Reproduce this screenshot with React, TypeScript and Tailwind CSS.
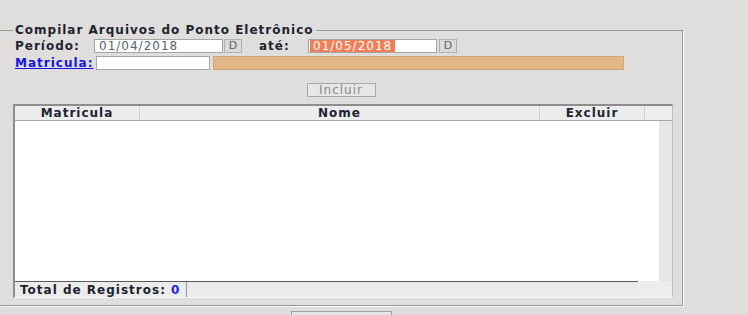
export default function App() {
  return (
    <div className="h-[315px] w-[748px] overflow-hidden bg-[#dfdedc] font-['DejaVu_Sans',sans-serif] text-[12px] leading-[14px] tracking-[1px] text-[#1d2431]">
      <fieldset className="mt-[23px] w-[683px] border border-l-0 border-[#9a9a9a] pb-[7px] shadow-[1px_1px_0_#f5f5f5]">
        <legend className="ml-[13px] px-[2px] font-bold">
          Compilar Arquivos do Ponto Eletrônico
        </legend>

        {/* periodo */}
        <div className="mt-[1px] flex h-[15px] items-center pl-[15px]">
          <span className="w-[79px] font-bold">Período:</span>
          <div className="flex h-[14px] w-[129px] items-center border border-[#a5a5a5] bg-white pl-[4px] text-[#5c6472]">
            01/04/2018
          </div>
          <div className="ml-[1px] flex h-[14px] w-[18px] items-center justify-center border border-[#b0b0b0] bg-[#dadada] text-[11px] tracking-normal text-[#666]">
            D
          </div>
          <span className="ml-[17px] w-[49px] font-bold">até:</span>
          <div className="flex h-[14px] w-[129px] items-center border border-[#a5a5a5] bg-white pl-[1px]">
            <span className="bg-[#f07f58] px-[3px] leading-[12px] text-white">01/05/2018</span>
          </div>
          <div className="ml-[2px] flex h-[14px] w-[18px] items-center justify-center border border-[#b0b0b0] bg-[#dadada] text-[11px] tracking-normal text-[#666]">
            D
          </div>
        </div>

        {/* matricula */}
        <div className="mt-[3px] flex h-[14px] items-center pl-[15px]">
          <a className="w-[81px] cursor-pointer font-bold text-[#1414e6] underline">Matricula:</a>
          <div className="h-[14px] w-[114px] border border-[#a5a5a5] bg-white" />
          <div className="ml-[3px] h-[14px] w-[411px] border border-[#c9a77f] bg-[#e3b886]" />
        </div>

        <div className="mt-[13px] flex justify-center">
          <div className="flex h-[14px] w-[69px] items-center justify-center border border-[#a8a8a8] bg-[#e6e6e6] text-[#8a8a8a]">
            Incluir
          </div>
        </div>

        {/* grid */}
        <div className="ml-[13px] mt-[7px] w-[660px] border-b border-l-2 border-r border-t-2 border-[#8d8d8d] border-b-[#f6f6f6] border-r-[#c0c0c0]">
          <div className="flex h-[15px] border-b border-[#a8a8a8] bg-[#ececec] font-bold">
            <div className="flex w-[125px] items-center justify-center border-r border-[#d2d2d2]">Matricula</div>
            <div className="flex w-[400px] items-center justify-center border-r border-[#d2d2d2]">Nome</div>
            <div className="flex w-[105px] items-center justify-center border-r border-[#d2d2d2]">Excluir</div>
            <div className="flex-1 bg-[#eeeeee]" />
          </div>
          <div className="flex h-[160px]">
            <div className="w-[644px] bg-white" />
            <div className="flex-1 bg-[#e6e6e6]" />
          </div>
          <div className="flex h-[16px]">
            <div className="flex w-[623px] border-t border-[#5a5a5a] bg-[#ebebeb]">
              <div className="flex w-[172px] items-center border-r border-[#9a9a9a] pl-[5px] font-bold">
                Total de Registros:&nbsp;<span className="text-[#2323d8]">0</span>
              </div>
            </div>
            <div className="flex-1 bg-[#ededed]" />
          </div>
        </div>
      </fieldset>

      <div className="ml-[291px] mt-[5px] h-[20px] w-[101px] border border-[#a0a0a0] bg-[#e6e6e6]" />
    </div>
  );
}
